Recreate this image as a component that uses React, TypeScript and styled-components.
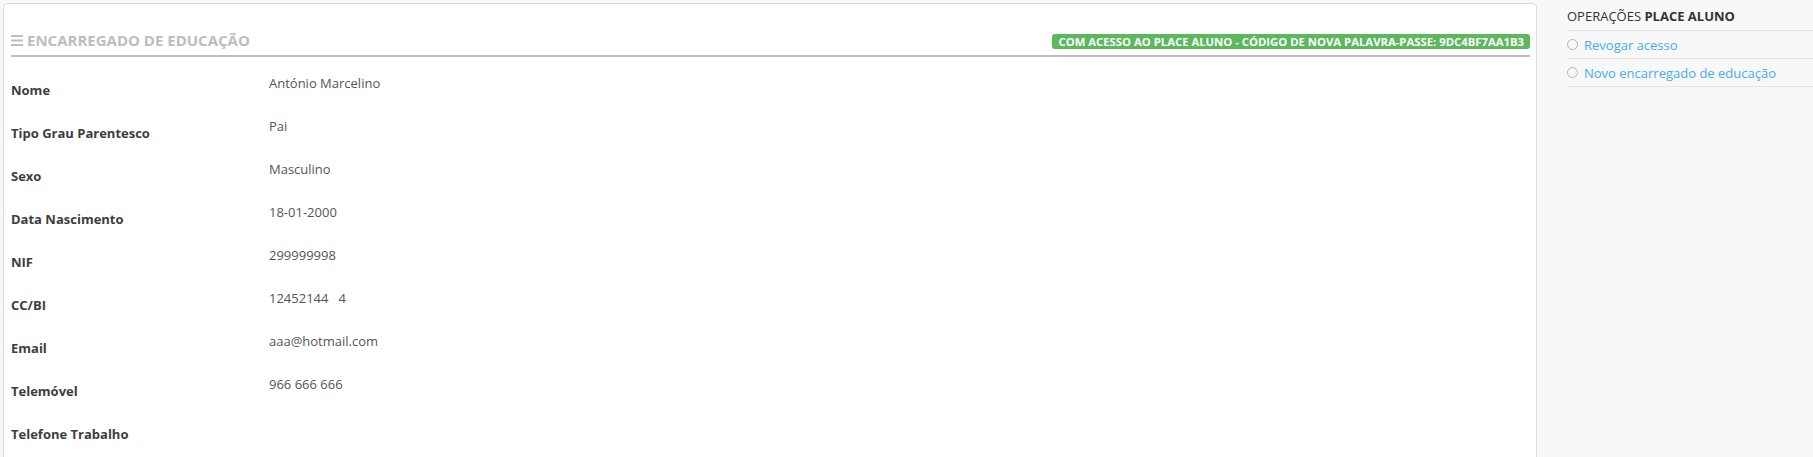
import styled, { createGlobalStyle } from 'styled-components';

const GlobalStyle = createGlobalStyle`
	html, body {
		margin: 0;
		padding: 0;
		overflow: hidden;
		background: #f8f8f8;
		font-family: 'Open Sans', 'Liberation Sans', sans-serif;
	}
`;

const fields = [
	{ label: 'Nome', value: 'António Marcelino' },
	{ label: 'Tipo Grau Parentesco', value: 'Pai' },
	{ label: 'Sexo', value: 'Masculino' },
	{ label: 'Data Nascimento', value: '18-01-2000' },
	{ label: 'NIF', value: '299999998' },
	{ label: 'CC/BI', value: '12452144\u00a0\u00a0\u00a04' },
	{ label: 'Email', value: 'aaa@hotmail.com' },
	{ label: 'Telemóvel', value: '966 666 666' },
	{ label: 'Telefone Trabalho', value: '' },
];

const operations = ['Revogar acesso', 'Novo encarregado de educação'];

const Page = styled.div`
	display: flex;
	align-items: flex-start;
	height: 100vh;
`;

const Panel = styled.section`
	flex: 0 0 1534px;
	box-sizing: border-box;
	margin: 3px 0 0 3px;
	min-height: 500px;
	background: #fff;
	border: 1px solid #dcdcdc;
	border-radius: 4px;
	padding: 26px 6px 0 7px;
`;

const Heading = styled.div`
	display: flex;
	justify-content: space-between;
	align-items: flex-end;
	padding-bottom: 5px;
	border-bottom: 2px solid #bdbdbd;
`;

const Title = styled.h3`
	display: flex;
	align-items: center;
	gap: 4px;
	margin: 0;
	font-size: 15px;
	line-height: 20px;
	font-weight: 700;
	color: #bdbdbd;
	text-transform: uppercase;
`;

const Badge = styled.span`
	display: inline-block;
	margin-bottom: 1px;
	padding: 0 6px;
	height: 15px;
	line-height: 15px;
	font-size: 11.3px;
	font-weight: 700;
	color: #fff;
	background: #5cb85c;
	border-radius: 3px;
	white-space: nowrap;
`;

const FieldList = styled.dl`
	margin: 0;
	padding-top: 17px;
`;

const FieldRow = styled.div`
	display: grid;
	grid-template-columns: 258px 1fr;
	height: 43px;
	font-size: 13px;
	line-height: 18px;
`;

const Label = styled.dt`
	padding-top: 7px;
	font-weight: 700;
	color: #3d3d3d;
`;

const Value = styled.dd`
	margin: 0;
	color: #555;
`;

const Sidebar = styled.aside`
	flex: 1;
	padding: 7px 0 0 30px;
	font-size: 13px;
	line-height: 18px;
	color: #333;
`;

const SideTitle = styled.div`
	padding-bottom: 5px;
	border-bottom: 1px solid #e6e6e6;
	text-transform: uppercase;

	strong {
		font-weight: 700;
	}
`;

const OpList = styled.ul`
	list-style: none;
	margin: 0;
	padding: 0;
`;

const OpItem = styled.li`
	display: flex;
	align-items: center;
	gap: 6px;
	height: 27px;
	border-bottom: 1px solid #e6e6e6;
`;

const Bullet = styled.span`
	box-sizing: border-box;
	width: 11px;
	height: 11px;
	border: 1.5px solid #b5b5b5;
	border-radius: 50%;
`;

const OpLink = styled.a`
	color: #45aef0;
	text-decoration: none;
	cursor: pointer;
`;

function BarsIcon() {
	return (
		<svg width="12" height="11" viewBox="0 0 12 11" fill="#bdbdbd">
			<rect x="0" y="0" width="12" height="2" />
			<rect x="0" y="4.5" width="12" height="2" />
			<rect x="0" y="9" width="12" height="2" />
		</svg>
	);
}

export default function App() {
	return (
		<>
			<GlobalStyle />
			<Page>
				<Panel>
					<Heading>
						<Title>
							<BarsIcon />
							Encarregado de educação
						</Title>
						<Badge>COM ACESSO AO PLACE ALUNO - CÓDIGO DE NOVA PALAVRA-PASSE: 9DC4BF7AA1B3</Badge>
					</Heading>
					<FieldList>
						{fields.map(f => (
							<FieldRow key={f.label}>
								<Label>{f.label}</Label>
								<Value>{f.value}</Value>
							</FieldRow>
						))}
					</FieldList>
				</Panel>
				<Sidebar>
					<SideTitle>
						Operações <strong>Place Aluno</strong>
					</SideTitle>
					<OpList>
						{operations.map(op => (
							<OpItem key={op}>
								<Bullet />
								<OpLink>{op}</OpLink>
							</OpItem>
						))}
					</OpList>
				</Sidebar>
			</Page>
		</>
	);
}
